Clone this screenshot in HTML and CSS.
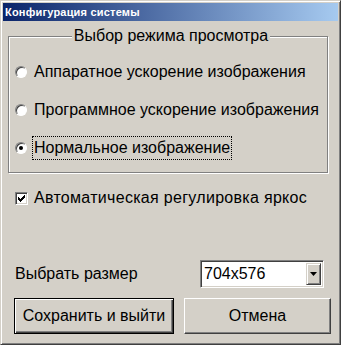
FILE: index.html
```html
<!DOCTYPE html>
<html lang="ru">
<head>
    <meta charset="UTF-8">
    <title>Конфигурация системы</title>
    <link rel="stylesheet" href="styles.css">
</head>
<body>
    <div class="window">
        <div class="titlebar">Конфигурация системы</div>
        <div class="client">
            <fieldset class="group">
                <legend>Выбор режима просмотра</legend>
                <div class="option">
                    <span class="radio"></span>
                    <span class="label">Аппаратное ускорение изображения</span>
                </div>
                <div class="option">
                    <span class="radio"></span>
                    <span class="label">Программное ускорение изображения</span>
                </div>
                <div class="option">
                    <span class="radio checked"></span>
                    <span class="label focused">Нормальное изображение</span>
                </div>
            </fieldset>

            <div class="check-row">
                <span class="checkbox">
                    <svg width="7" height="7" viewBox="0 0 7 7"><path d="M0 2h1v1h1v1h1v-1h1v-1h1v-1h1v-1h1v3h-1v1h-1v1h-1v1h-1v1h-1v-1h-1v-1h-1z" fill="#000"/></svg>
                </span>
                <span class="label">Автоматическая регулировка яркос</span>
            </div>

            <div class="size-row">
                <span class="size-label">Выбрать размер</span>
                <div class="combo">
                    <span class="combo-value">704x576</span>
                    <span class="combo-btn">
                        <svg width="7" height="4" viewBox="0 0 7 4"><path d="M0 0h7l-3.5 4z" fill="#000"/></svg>
                    </span>
                </div>
            </div>

            <div class="buttons">
                <button class="btn default">Сохранить и выйти</button>
                <button class="btn cancel">Отмена</button>
            </div>
        </div>
    </div>
</body>
</html>
```

FILE: styles.css
```css
body {
    margin: 0;
    background: #d4d0c8;
    font-family: "Liberation Sans", Arial, sans-serif;
    font-size: 16px;
    color: #000;
}
.window {
    width: 341px;
    height: 345px;
    box-sizing: border-box;
    border: 1px solid;
    border-color: #d4d0c8 #404040 #404040 #d4d0c8;
    box-shadow: inset 1px 1px #fff, inset -1px -1px #808080;
    padding: 2px;
    background: #d4d0c8;
    overflow: hidden;
}
.titlebar {
    height: 18px;
    line-height: 18px;
    padding-left: 2px;
    background: linear-gradient(to right, #0a246a, #a6caf0);
    color: #fff;
    font-weight: bold;
    font-size: 11px;
    letter-spacing: 0.2px;
    white-space: nowrap;
}
.client {
    padding-left: 5px;
}
.group {
    width: 320px;
    box-sizing: border-box;
    margin: 6px 0 0 0;
    padding: 15px 0 12px 6px;
    border: 1px solid #808080;
    box-shadow: inset 1px 1px #fff, 1px 1px #fff;
}
.group legend {
    margin: 0 auto;
    padding: 0 2px;
    line-height: 18px;
    background: #d4d0c8;
}
.option {
    display: flex;
    align-items: center;
    height: 24px;
    margin-bottom: 14px;
}
.option:last-child {
    margin-bottom: 0;
}
.radio {
    position: relative;
    width: 12px;
    height: 12px;
    box-sizing: border-box;
    border-radius: 50%;
    border: 1px solid;
    border-color: #808080 #fff #fff #808080;
    background: #fff;
    box-shadow: inset 1px 1px #404040;
    flex: none;
    margin-right: 5px;
}
.radio.checked::after {
    content: "";
    position: absolute;
    left: 3px;
    top: 3px;
    width: 4px;
    height: 4px;
    border-radius: 50%;
    background: #000;
}
.label {
    display: block;
    padding: 0 1px;
    line-height: 22px;
    border: 1px solid transparent;
    white-space: nowrap;
}
.option .label.focused {
    border: 1px dotted #000;
}
.check-row {
    display: flex;
    align-items: center;
    margin-top: 13px;
    height: 24px;
    padding-left: 7px;
}
.checkbox {
    width: 13px;
    height: 13px;
    box-sizing: border-box;
    border: 1px solid;
    border-color: #808080 #fff #fff #808080;
    box-shadow: inset 1px 1px #404040, inset -1px -1px #d4d0c8;
    background: #fff;
    display: flex;
    align-items: center;
    justify-content: center;
    flex: none;
    margin-right: 5px;
}
.check-row .label {
    border: none;
    letter-spacing: 0.3px;
}
.size-row {
    display: flex;
    align-items: center;
    justify-content: space-between;
    margin-top: 50px;
    padding-left: 7px;
    width: 309px;
}
.combo {
    width: 124px;
    height: 28px;
    box-sizing: border-box;
    border: 1px solid;
    border-color: #808080 #fff #fff #808080;
    box-shadow: inset 1px 1px #404040, inset -1px -1px #d4d0c8;
    background: #fff;
    display: flex;
    align-items: center;
    padding: 2px;
}
.combo-value {
    flex: 1;
    padding-left: 1px;
}
.combo-btn {
    width: 15px;
    height: 22px;
    box-sizing: border-box;
    background: #d4d0c8;
    border: 1px solid;
    border-color: #d4d0c8 #404040 #404040 #d4d0c8;
    box-shadow: inset 1px 1px #fff, inset -1px -1px #808080;
    display: flex;
    align-items: center;
    justify-content: center;
}
.buttons {
    display: flex;
    gap: 10px;
    margin-top: 10px;
    padding-left: 6px;
}
.btn {
    font-family: "Liberation Sans", Arial, sans-serif;
    font-size: 16px;
    height: 36px;
    background: #d4d0c8;
    border: 1px solid;
    border-color: #fff #404040 #404040 #fff;
    box-shadow: inset -1px -1px #808080;
    padding: 0;
    color: #000;
}
.btn.default {
    width: 160px;
    border-color: #000;
    box-shadow: inset 1px 1px #fff, inset -1px -1px #404040, inset -2px -2px #808080;
}
.btn.cancel {
    width: 147px;
}
```
